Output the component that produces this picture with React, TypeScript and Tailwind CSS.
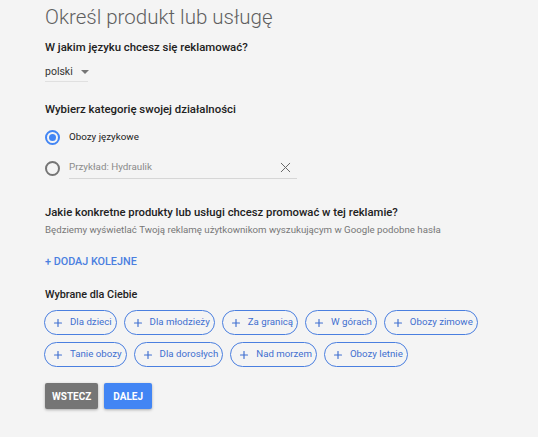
import { Plus, X } from "lucide-react";

const row1 = ["Dla dzieci", "Dla młodzieży", "Za granicą", "W górach", "Obozy zimowe"];
const row2 = ["Tanie obozy", "Dla dorosłych", "Nad morzem", "Obozy letnie"];

function Chip({ label }: { label: string }) {
    return (
        <button className="shrink-0 whitespace-nowrap flex items-center h-[25px] pl-[7px] pr-[4px] gap-[6px] border border-[#4a7fe0] rounded-full text-[9.7px] text-[#3f6fd0] bg-transparent">
            <Plus size={12} strokeWidth={2.3} />
            <span>{label}</span>
        </button>
    );
}

export default function App() {
    return (
        <div className="w-[538px] h-[437px] bg-[#f4f4f4] text-[#212121] pl-[45px] pt-[3px] overflow-hidden" style={{ fontFamily: "Roboto, Arial, sans-serif" }}>
            <h1 className="text-[20.5px] font-light text-[#5f5f5f] leading-[28px]">Określ produkt lub usługę</h1>

            <h2 className="mt-[7px] text-[11.4px] font-medium leading-[18px]">W jakim języku chcesz się reklamować?</h2>
            <div className="mt-[8px] w-[43px] h-[18px] flex items-center gap-[8px] border-b border-[#e0e0e0] pb-[1px] text-[10.5px] text-[#333]">
                <span>polski</span>
                <span className="w-0 h-0 border-l-[4px] border-r-[4px] border-t-[4px] border-l-transparent border-r-transparent border-t-[#757575]" />
            </div>

            <h2 className="mt-[18px] text-[11.4px] font-medium leading-[18px]">Wybierz kategorię swojej działalności</h2>
            <div className="mt-[9px] flex items-center h-[20px]">
                <span className="w-[15px] h-[15px] rounded-full border-2 border-[#4285f4] flex items-center justify-center">
                    <span className="w-[7px] h-[7px] rounded-full bg-[#4285f4]" />
                </span>
                <span className="ml-[9px] text-[9.8px] text-[#222]">Obozy językowe</span>
            </div>
            <div className="mt-[10px] flex items-center h-[22px]">
                <span className="w-[15px] h-[15px] rounded-full border-2 border-[#757575]" />
                <div className="ml-[9px] w-[228px] h-[22px] flex items-center justify-between border-b border-[#d6d6d6]">
                    <span className="text-[9.8px] text-[#8a8a8a]">Przykład: Hydraulik</span>
                    <X size={17} strokeWidth={1.4} className="text-[#666] mr-[3px]" />
                </div>
            </div>

            <h2 className="mt-[25px] text-[11.3px] font-medium leading-[18px]">Jakie konkretne produkty lub usługi chcesz promować w tej reklamie?</h2>
            <p className="mt-[1px] text-[9.7px] text-[#777] leading-[14px]">Będziemy wyświetlać Twoją reklamę użytkownikom wyszukującym w Google podobne hasła</p>

            <div className="mt-[18px] text-[10.8px] font-medium text-[#4a7fe0] leading-[14px]">+ DODAJ KOLEJNE</div>

            <h3 className="mt-[19px] text-[10.8px] font-medium text-[#222] leading-[14px]">Wybrane dla Ciebie</h3>
            <div className="mt-[8px] flex flex-col gap-[7px] -ml-[1px]">
                <div className="flex gap-[7px]">
                    {row1.map((l) => (
                        <Chip key={l} label={l} />
                    ))}
                </div>
                <div className="flex gap-[7px]">
                    {row2.map((l) => (
                        <Chip key={l} label={l} />
                    ))}
                </div>
            </div>

            <div className="mt-[16px] flex gap-[6px]">
                <button className="h-[26px] px-[7px] rounded-[2px] bg-[#757575] text-white text-[10px] font-bold shadow-[0_1px_3px_rgba(0,0,0,0.3)]">WSTECZ</button>
                <button className="h-[26px] px-[9px] rounded-[2px] bg-[#4285f4] text-white text-[10px] font-bold shadow-[0_1px_3px_rgba(0,0,0,0.3)]">DALEJ</button>
            </div>
        </div>
    );
}
